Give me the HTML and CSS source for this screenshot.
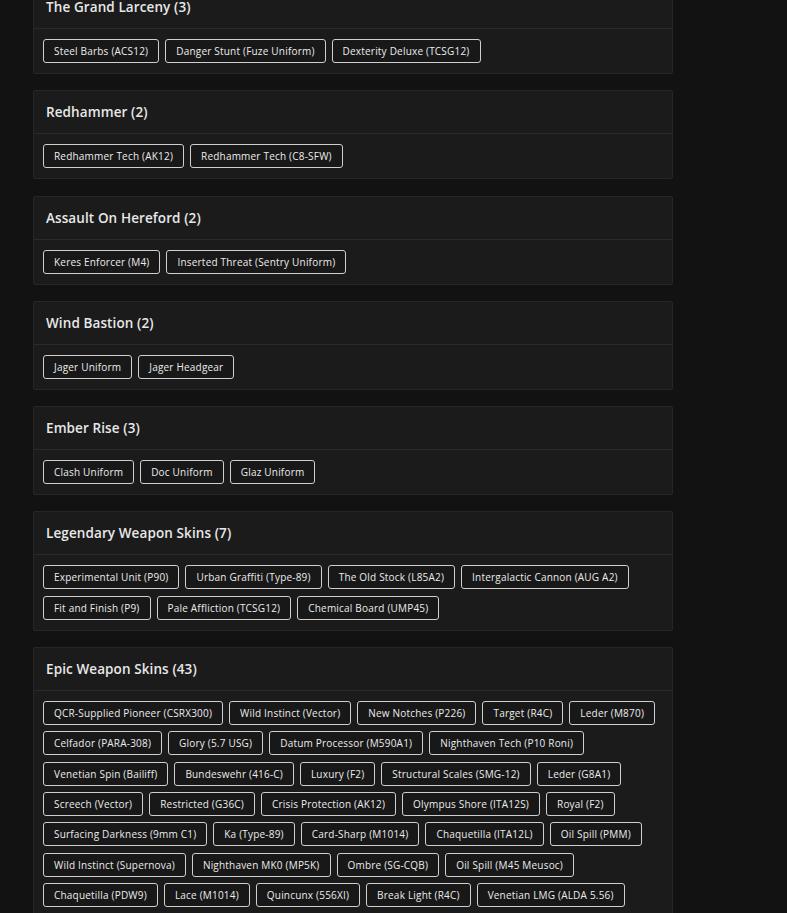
FILE: index.html
```html
<!DOCTYPE html>
<html lang="en">
<head>
<meta charset="utf-8">
<title>Collections</title>
<link rel="stylesheet" href="styles.css">
</head>
<body>
<main class="list">
  <section class="card">
    <h2 class="card-title">The Grand Larceny (3)</h2>
    <div class="tags">
      <span class="tag">Steel Barbs (ACS12)</span>
      <span class="tag">Danger Stunt (Fuze Uniform)</span>
      <span class="tag">Dexterity Deluxe (TCSG12)</span>
    </div>
  </section>
  <section class="card">
    <h2 class="card-title">Redhammer (2)</h2>
    <div class="tags">
      <span class="tag">Redhammer Tech (AK12)</span>
      <span class="tag">Redhammer Tech (C8-SFW)</span>
    </div>
  </section>
  <section class="card">
    <h2 class="card-title">Assault On Hereford (2)</h2>
    <div class="tags">
      <span class="tag">Keres Enforcer (M4)</span>
      <span class="tag">Inserted Threat (Sentry Uniform)</span>
    </div>
  </section>
  <section class="card">
    <h2 class="card-title">Wind Bastion (2)</h2>
    <div class="tags">
      <span class="tag">Jager Uniform</span>
      <span class="tag">Jager Headgear</span>
    </div>
  </section>
  <section class="card">
    <h2 class="card-title">Ember Rise (3)</h2>
    <div class="tags">
      <span class="tag">Clash Uniform</span>
      <span class="tag">Doc Uniform</span>
      <span class="tag">Glaz Uniform</span>
    </div>
  </section>
  <section class="card">
    <h2 class="card-title">Legendary Weapon Skins (7)</h2>
    <div class="tags">
      <span class="tag">Experimental Unit (P90)</span>
      <span class="tag">Urban Graffiti (Type-89)</span>
      <span class="tag">The Old Stock (L85A2)</span>
      <span class="tag">Intergalactic Cannon (AUG A2)</span>
      <span class="tag">Fit and Finish (P9)</span>
      <span class="tag">Pale Affliction (TCSG12)</span>
      <span class="tag">Chemical Board (UMP45)</span>
    </div>
  </section>
  <section class="card">
    <h2 class="card-title">Epic Weapon Skins (43)</h2>
    <div class="tags">
      <span class="tag">QCR-Supplied Pioneer (CSRX300)</span>
      <span class="tag">Wild Instinct (Vector)</span>
      <span class="tag">New Notches (P226)</span>
      <span class="tag">Target (R4C)</span>
      <span class="tag">Leder (M870)</span>
      <span class="tag">Celfador (PARA-308)</span>
      <span class="tag">Glory (5.7 USG)</span>
      <span class="tag">Datum Processor (M590A1)</span>
      <span class="tag">Nighthaven Tech (P10 Roni)</span>
      <span class="tag">Venetian Spin (Bailiff)</span>
      <span class="tag">Bundeswehr (416-C)</span>
      <span class="tag">Luxury (F2)</span>
      <span class="tag">Structural Scales (SMG-12)</span>
      <span class="tag">Leder (G8A1)</span>
      <span class="tag">Screech (Vector)</span>
      <span class="tag">Restricted (G36C)</span>
      <span class="tag">Crisis Protection (AK12)</span>
      <span class="tag">Olympus Shore (ITA12S)</span>
      <span class="tag">Royal (F2)</span>
      <span class="tag">Surfacing Darkness (9mm C1)</span>
      <span class="tag">Ka (Type-89)</span>
      <span class="tag">Card-Sharp (M1014)</span>
      <span class="tag">Chaquetilla (ITA12L)</span>
      <span class="tag">Oil Spill (PMM)</span>
      <span class="tag">Wild Instinct (Supernova)</span>
      <span class="tag">Nighthaven MK0 (MP5K)</span>
      <span class="tag">Ombre (SG-CQB)</span>
      <span class="tag">Oil Spill (M45 Meusoc)</span>
      <span class="tag">Chaquetilla (PDW9)</span>
      <span class="tag">Lace (M1014)</span>
      <span class="tag">Quincunx (556XI)</span>
      <span class="tag">Break Light (R4C)</span>
      <span class="tag">Venetian LMG (ALDA 5.56)</span>
    </div>
  </section>
</main>
</body>
</html>
```
FILE: styles.css
```css
html, body {
  margin: 0;
  padding: 0;
  background: #121212;
  overflow: hidden;
}
body {
  font-family: "Open Sans", "Liberation Sans", sans-serif;
  color: #e4e4e4;
}
.list {
  width: 640px;
  margin: -15px 0 0 33px;
  display: flex;
  flex-direction: column;
  gap: 16.3px;
}
.card {
  background: #1b1b1b;
  border: 1px solid #262626;
  border-radius: 2px;
}
.card-title {
  margin: 0;
  height: 42px;
  display: flex;
  align-items: center;
  padding: 0 12px;
  font-size: 13.5px;
  font-weight: 600;
  letter-spacing: 0.1px;
  color: #e8e8e8;
  border-bottom: 1px solid #2a2a2a;
}
.tags {
  display: flex;
  flex-wrap: wrap;
  gap: 6.3px 6px;
  padding: 10px 9px 10px;
}
.tag {
  display: inline-block;
  border: 1px solid #cfcfcf;
  border-radius: 3px;
  padding: 0 10px;
  height: 22px;
  line-height: 22px;
  font-size: 10px;
  letter-spacing: 0.2px;
  color: #ececec;
  background: #181818;
  white-space: nowrap;
}
```
